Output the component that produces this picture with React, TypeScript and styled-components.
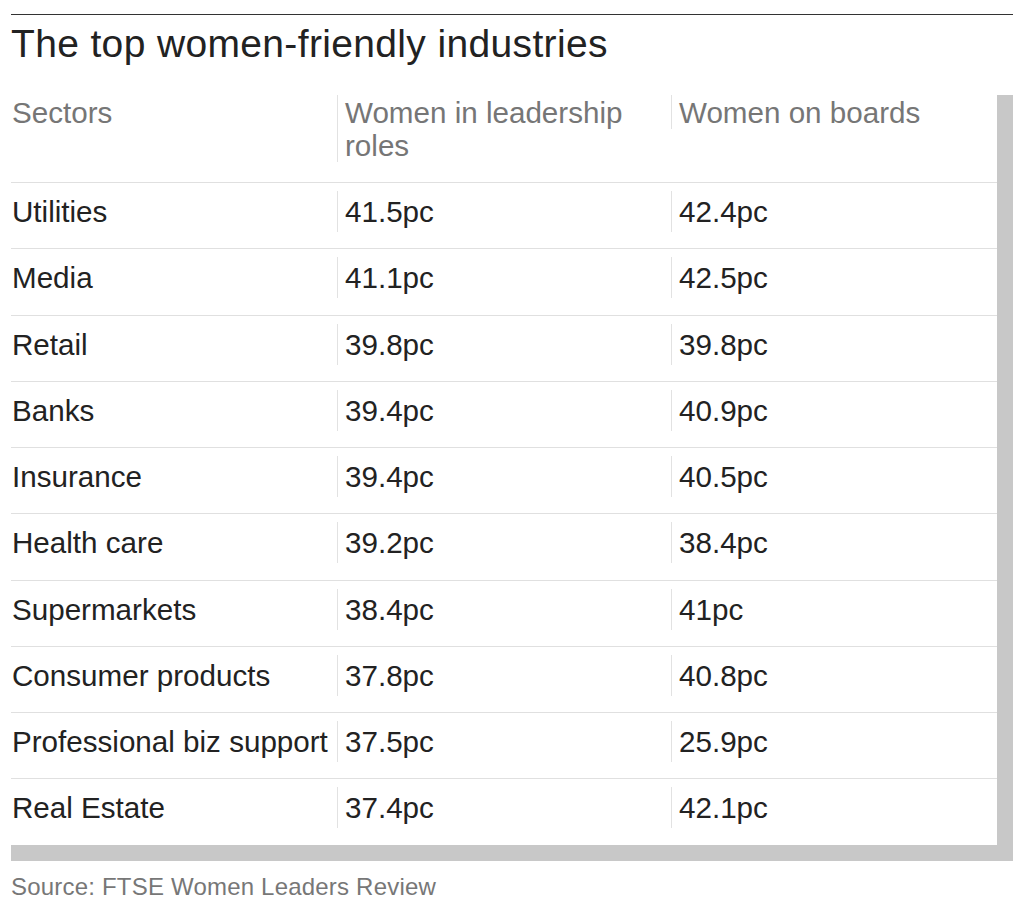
import styled, { createGlobalStyle } from 'styled-components'

const GlobalStyle = createGlobalStyle`
  body {
    margin: 0;
    background: #ffffff;
    font-family: 'Liberation Sans', Arial, sans-serif;
  }
`

const Page = styled.div`
  padding: 14px 11px 0 11px;
  width: 1002px;
`

const TopRule = styled.div`
  border-top: 1px solid #333333;
`

const Title = styled.h1`
  margin: 6px 0 28px 0;
  font-size: 39px;
  line-height: 46px;
  font-weight: 400;
  letter-spacing: 0.35px;
  color: #222222;
`

const Table = styled.div`
  border-right: 16px solid #c8c8c8;
  border-bottom: 16px solid #c8c8c8;
  background: #ffffff;
`

const Row = styled.div<{ header?: boolean }>`
  display: grid;
  grid-template-columns: 326px 334px 1fr;
  align-items: start;
  padding: ${({ header }) => (header ? '0 0 20px 0' : '8px 0 16.25px 0')};
  border-top: ${({ header }) => (header ? 'none' : '1px solid #e0e0e0')};
`

const Cell = styled.div<{ header?: boolean; divided?: boolean }>`
  font-size: 29.6px;
  line-height: ${({ header }) => (header ? '33px' : '41px')};
  padding-top: ${({ header }) => (header ? '1px' : '0')};
  padding-left: ${({ divided }) => (divided ? '7px' : '1px')};
  border-left: ${({ divided }) => (divided ? '1px solid #e2e2e2' : 'none')};
  color: ${({ header }) => (header ? '#767676' : '#222222')};
  white-space: nowrap;

  ${({ header }) => header && 'white-space: normal; padding-right: 24px;'}
`

const Source = styled.p`
  margin: 12px 0 0 0;
  font-size: 24px;
  line-height: 28px;
  letter-spacing: 0.2px;
  color: #777777;
`

const rows: [string, string, string][] = [
  ['Utilities', '41.5pc', '42.4pc'],
  ['Media', '41.1pc', '42.5pc'],
  ['Retail', '39.8pc', '39.8pc'],
  ['Banks', '39.4pc', '40.9pc'],
  ['Insurance', '39.4pc', '40.5pc'],
  ['Health care', '39.2pc', '38.4pc'],
  ['Supermarkets', '38.4pc', '41pc'],
  ['Consumer products', '37.8pc', '40.8pc'],
  ['Professional biz support', '37.5pc', '25.9pc'],
  ['Real Estate', '37.4pc', '42.1pc'],
]

export default function App() {
  return (
    <>
      <GlobalStyle />
      <Page>
        <TopRule />
        <Title>The top women-friendly industries</Title>
        <Table>
          <Row header>
            <Cell header>Sectors</Cell>
            <Cell header divided>
              Women in leadership roles
            </Cell>
            <Cell header divided>
              Women on boards
            </Cell>
          </Row>
          {rows.map(([sector, leaders, boards]) => (
            <Row key={sector}>
              <Cell>{sector}</Cell>
              <Cell divided>{leaders}</Cell>
              <Cell divided>{boards}</Cell>
            </Row>
          ))}
        </Table>
        <Source>Source: FTSE Women Leaders Review</Source>
      </Page>
    </>
  )
}
